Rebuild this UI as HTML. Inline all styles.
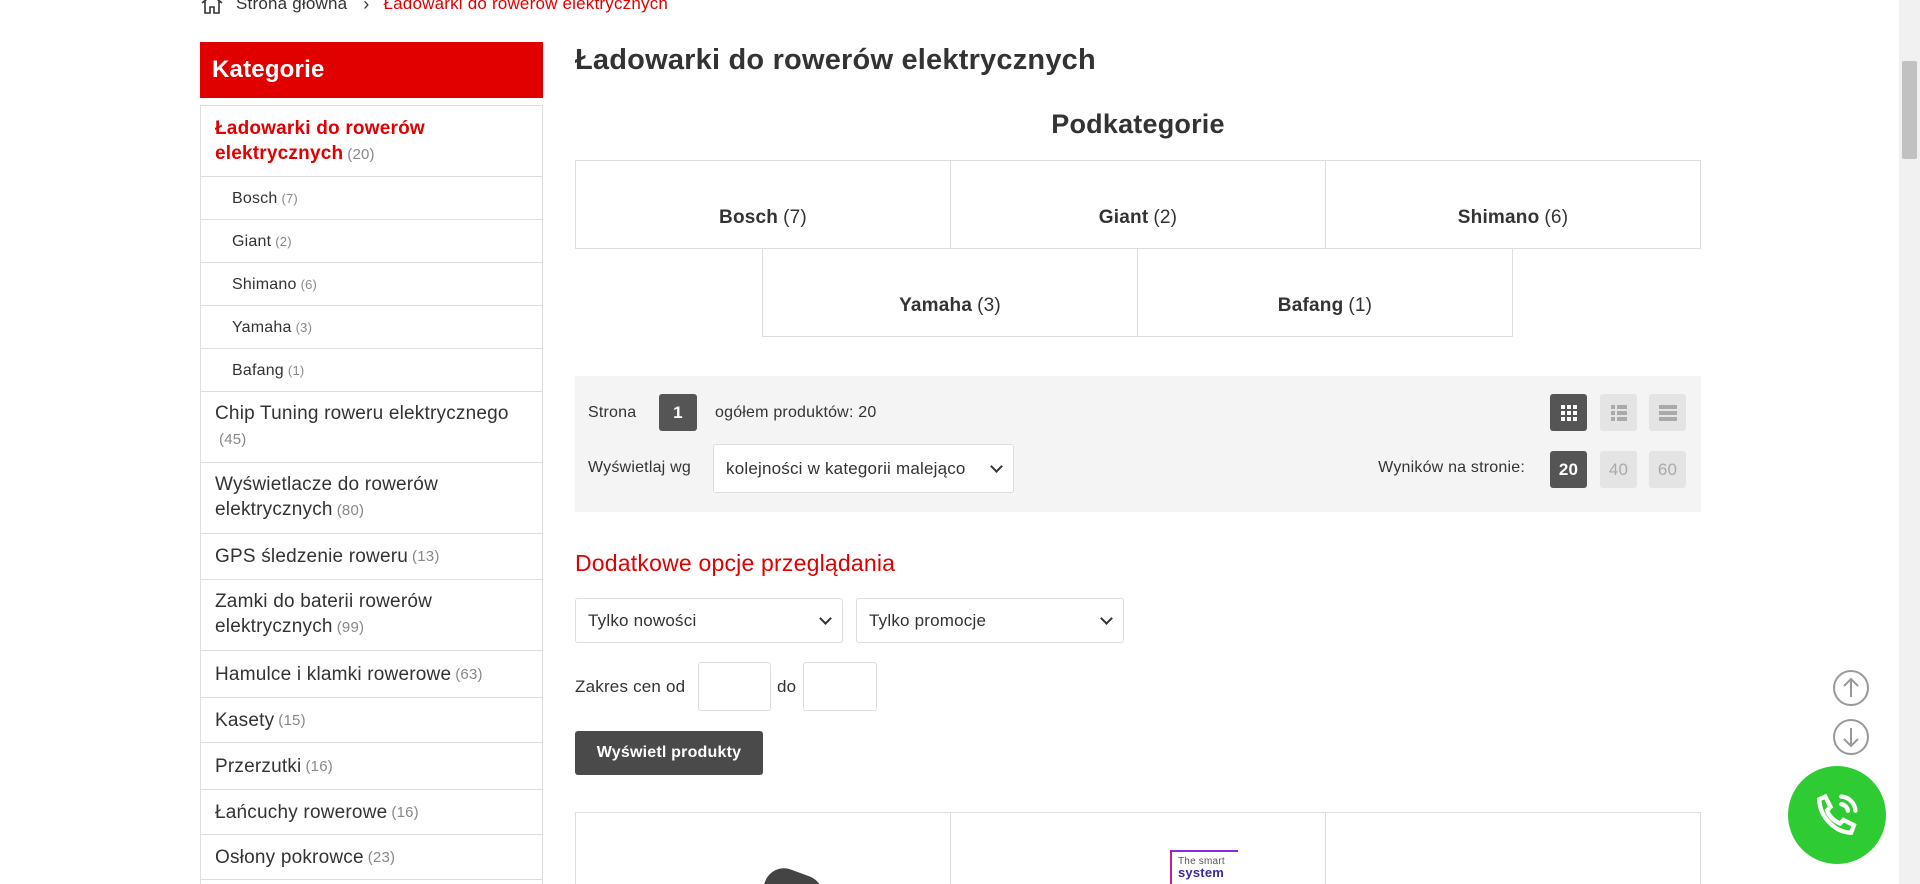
<!DOCTYPE html>
<html><head><meta charset="utf-8"><style>
*{box-sizing:border-box;margin:0;padding:0}
html,body{width:1920px;height:884px;overflow:hidden}
body{background:#fff;font-family:"Liberation Sans",sans-serif;color:#333;position:relative;letter-spacing:0.2px}
.abs{position:absolute}
.bc{top:-7px;left:200px;font-size:17px;color:#333;display:flex;align-items:center;white-space:nowrap}
.side{left:200px;top:42px;width:343px}
.sh{height:56px;background:#e10000;color:#fff;font-weight:bold;font-size:24px;padding:14px 12px}
.list{margin-top:7px;border:1px solid #ddd;border-bottom:none}
.it{border-bottom:1px solid #ddd;padding:0 14px;font-size:19px;display:flex;align-items:center;line-height:25px}
.it.sub{padding-left:31px;font-size:16px}
.c{color:#888;font-size:15px;margin-left:4px}
.it.sub .c{font-size:13px}
h1{position:absolute;left:575px;top:44px;font-size:29px;font-weight:bold;color:#333}
.pk{left:575px;width:1126px;top:109px;text-align:center;font-size:27px;font-weight:bold}
.cell{position:absolute;border:1px solid #ddd;height:89px;display:flex;align-items:center;justify-content:center;font-size:19px;padding-top:26px}
.cell b{margin-right:5px}
.tb{left:575px;top:376px;width:1126px;height:136px;background:#f4f4f4;font-size:16px}
.sq{position:absolute;width:37px;height:37px;border-radius:3px;background:#e4e4e4;color:#aaa;display:flex;align-items:center;justify-content:center;font-size:17px}
.sq.on{background:#555;color:#fff;font-weight:bold}
.sel{position:absolute;background:#fff;border:1px solid #ddd;border-radius:3px;font-size:17px;display:flex;align-items:center;padding:0 12px;justify-content:space-between}
.chev{width:9px;height:9px;border-right:2px solid #333;border-bottom:2px solid #333;transform:rotate(45deg);margin-top:-5px}
.inp{position:absolute;background:#fff;border:1px solid #ddd;border-radius:3px}
</style></head><body>
<div class="abs bc">
<svg width="24" height="22" viewBox="0 0 24 22" fill="none" stroke="#333" stroke-width="1.6"><path d="M2 10 L12 2 L22 10 M5 8 V20 H10 V14 H14 V20 H19 V8"/></svg>
<span style="margin-left:12px">Strona główna</span>
<span style="margin:0 14px 0 16px;font-size:18px">›</span>
<span style="color:#e10000">Ładowarki do rowerów elektrycznych</span>
</div>

<div class="abs side">
<div class="sh">Kategorie</div>
<div class="list">
<div class="it" style="height:71px;color:#e10000;font-weight:bold;display:block;padding-top:10px">Ładowarki do rowerów<br>elektrycznych<span class="c" style="font-weight:normal">(20)</span></div>
<div class="it sub" style="height:43px">Bosch<span class="c">(7)</span></div>
<div class="it sub" style="height:43px">Giant<span class="c">(2)</span></div>
<div class="it sub" style="height:43px">Shimano<span class="c">(6)</span></div>
<div class="it sub" style="height:43px">Yamaha<span class="c">(3)</span></div>
<div class="it sub" style="height:43px">Bafang<span class="c">(1)</span></div>
<div class="it" style="height:71px;display:block;padding-top:9px">Chip Tuning roweru elektrycznego<br><span class="c">(45)</span></div>
<div class="it" style="height:71px;display:block;padding-top:9px">Wyświetlacze do rowerów<br>elektrycznych<span class="c">(80)</span></div>
<div class="it" style="height:46px">GPS śledzenie roweru<span class="c">(13)</span></div>
<div class="it" style="height:71px;display:block;padding-top:9px">Zamki do baterii rowerów<br>elektrycznych<span class="c">(99)</span></div>
<div class="it" style="height:47px">Hamulce i klamki rowerowe<span class="c">(63)</span></div>
<div class="it" style="height:45px">Kasety<span class="c">(15)</span></div>
<div class="it" style="height:47px">Przerzutki<span class="c">(16)</span></div>
<div class="it" style="height:45px">Łańcuchy rowerowe<span class="c">(16)</span></div>
<div class="it" style="height:45px">Osłony pokrowce<span class="c">(23)</span></div>
<div class="it" style="height:45px"></div>
</div></div>

<h1>Ładowarki do rowerów elektrycznych</h1>
<div class="abs pk">Podkategorie</div>
<div class="cell" style="left:575px;top:160px;width:376px"><b>Bosch</b>(7)</div>
<div class="cell" style="left:950px;top:160px;width:376px"><b>Giant</b>(2)</div>
<div class="cell" style="left:1325px;top:160px;width:376px"><b>Shimano</b>(6)</div>
<div class="cell" style="left:762px;top:248px;width:376px"><b>Yamaha</b>(3)</div>
<div class="cell" style="left:1137px;top:248px;width:376px"><b>Bafang</b>(1)</div>

<div class="abs tb">
<span class="abs" style="left:13px;top:28px">Strona</span>
<div class="sq on" style="left:84px;top:18px;width:38px">1</div>
<span class="abs" style="left:140px;top:28px">ogółem produktów: 20</span>
<span class="abs" style="left:13px;top:83px">Wyświetlaj wg</span>
<div class="sel" style="left:138px;top:68px;width:301px;height:49px">kolejności w kategorii malejąco<span class="chev"></span></div>
<div class="sq on" style="left:975px;top:18px"><svg width="16" height="16"><g fill="#fff"><rect x="0" y="0" width="4" height="4"/><rect x="6" y="0" width="4" height="4"/><rect x="12" y="0" width="4" height="4"/><rect x="0" y="6" width="4" height="4"/><rect x="6" y="6" width="4" height="4"/><rect x="12" y="6" width="4" height="4"/><rect x="0" y="12" width="4" height="4"/><rect x="6" y="12" width="4" height="4"/><rect x="12" y="12" width="4" height="4"/></g></svg></div>
<div class="sq" style="left:1025px;top:18px"><svg width="16" height="16"><g fill="#aaa"><rect x="0" y="0" width="4" height="4"/><rect x="6" y="0" width="10" height="4"/><rect x="0" y="6" width="4" height="4"/><rect x="6" y="6" width="10" height="4"/><rect x="0" y="12" width="4" height="4"/><rect x="6" y="12" width="10" height="4"/></g></svg></div>
<div class="sq" style="left:1074px;top:18px"><svg width="18" height="16"><g fill="#aaa"><rect x="0" y="0" width="18" height="4"/><rect x="0" y="6" width="18" height="4"/><rect x="0" y="12" width="18" height="4"/></g></svg></div>
<span class="abs" style="left:790px;top:83px;width:160px;text-align:right;right:auto">Wyników na stronie:</span>
<div class="sq on" style="left:975px;top:75px">20</div>
<div class="sq" style="left:1025px;top:75px">40</div>
<div class="sq" style="left:1074px;top:75px">60</div>
</div>

<div class="abs" style="left:575px;top:550px;font-size:23px;color:#e10000">Dodatkowe opcje przeglądania</div>
<div class="sel" style="left:575px;top:598px;width:268px;height:45px">Tylko nowości<span class="chev"></span></div>
<div class="sel" style="left:856px;top:598px;width:268px;height:45px">Tylko promocje<span class="chev"></span></div>
<span class="abs" style="left:575px;top:677px;font-size:17px">Zakres cen od</span>
<div class="inp" style="left:698px;top:662px;width:73px;height:49px"></div>
<span class="abs" style="left:777px;top:677px;font-size:17px">do</span>
<div class="inp" style="left:803px;top:662px;width:74px;height:49px"></div>
<div class="abs" style="left:575px;top:731px;width:188px;height:44px;background:#4a4a4a;border-radius:3px;color:#fff;font-size:16px;font-weight:bold;display:flex;align-items:center;justify-content:center">Wyświetl produkty</div>

<div class="abs" style="left:575px;top:812px;width:1126px;height:100px;border:1px solid #ddd"></div>
<div class="abs" style="left:950px;top:812px;width:1px;height:80px;background:#ddd"></div>
<div class="abs" style="left:1325px;top:812px;width:1px;height:80px;background:#ddd"></div>
<div class="abs" style="left:1170px;top:850px;width:68px;height:40px;border-top:2px solid #8a2be2;border-left:2px solid #c0208f;font-size:10px;line-height:11px;padding:4px 6px;color:#555">The smart<br><b style="color:#3a2b9a;font-size:13px">system</b></div>
<div class="abs" style="left:765px;top:872px;width:60px;height:30px;background:#444;border-radius:20px 20px 0 0;transform:rotate(20deg)"></div>

<svg class="abs" style="left:1832px;top:669px" width="38" height="38" viewBox="0 0 38 38" fill="none" stroke="#999" stroke-width="2"><circle cx="19" cy="19" r="17"/><path d="M19 28V10M12 17l7-7 7 7"/></svg>
<svg class="abs" style="left:1832px;top:718px" width="38" height="38" viewBox="0 0 38 38" fill="none" stroke="#999" stroke-width="2"><circle cx="19" cy="19" r="17"/><path d="M19 10v18M12 21l7 7 7-7"/></svg>
<div class="abs" style="left:1788px;top:766px;width:98px;height:98px;border-radius:50%;background:#2ecc32"></div>
<svg class="abs" style="left:1811px;top:789px" width="52" height="52" viewBox="0 0 24 24" fill="none" stroke="#fff" stroke-width="2" stroke-linecap="round"><path d="M6.6 3.5 9 8.3 7.4 9.9c1 2.7 3.3 5 6 6l1.6-1.6 4.8 2.4-1.3 3.5C11 19.9 4.1 13 3.8 4.8z"/><path d="M14 3.5a7 7 0 0 1 6.5 6.5M14 7a3.5 3.5 0 0 1 3 3"/></svg>

<div class="abs" style="left:1899px;top:0;width:21px;height:884px;background:#f1f1f1"></div>
<div class="abs" style="left:1902px;top:61px;width:15px;height:98px;background:#c1c1c1;border-radius:2px"></div>
</body></html>
